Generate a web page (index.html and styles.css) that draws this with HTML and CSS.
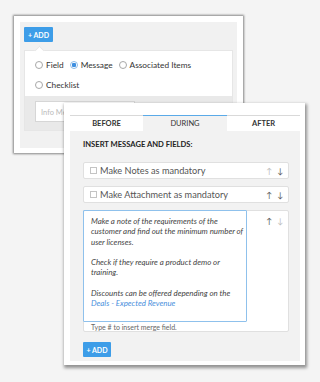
FILE: index.html
```html
<!DOCTYPE html>
<html lang="en">
<head>
  <meta charset="UTF-8">
  <title>Message Fields</title>
  <link rel="stylesheet" href="styles.css">
</head>
<body>
  <div class="stage">

    <div class="window window-back">
      <div class="window-inner">
        <button class="add-btn">+ ADD</button>
        <div class="popup">
          <div class="popup-options">
            <label class="radio"><span class="dot"></span>Field</label>
            <label class="radio"><span class="dot on"></span>Message</label>
            <label class="radio"><span class="dot"></span>Associated Items</label>
            <label class="radio"><span class="dot"></span>Checklist</label>
          </div>
          <div class="popup-foot">
            <div class="text-input">Info Message</div>
          </div>
        </div>
      </div>
    </div>

    <div class="window window-front">
      <div class="tabs">
        <div class="tab">BEFORE</div>
        <div class="tab active">DURING</div>
        <div class="tab">AFTER</div>
      </div>
      <div class="panel">
        <div class="panel-title">INSERT MESSAGE AND FIELDS:</div>

        <div class="row">
          <span class="check"></span>
          <span class="row-label">Make Notes as mandatory</span>
          <span class="arrows"><span class="muted">&#8593;</span><span>&#8595;</span></span>
        </div>

        <div class="row">
          <span class="check"></span>
          <span class="row-label">Make Attachment as mandatory</span>
          <span class="arrows"><span>&#8593;</span><span>&#8595;</span></span>
        </div>

        <div class="row row-message">
          <div class="message-col">
            <div class="message-box">
              <p>Make a note of the requirements of the<br>customer and find out the minimum number of<br>user licenses.</p>
              <p>Check if they require a product demo or<br>training.</p>
              <p>Discounts can be offered depending on the<br><span class="merge">Deals - Expected Revenue</span></p>
            </div>
            <div class="hint">Type # to insert merge field.</div>
          </div>
          <span class="arrows"><span>&#8593;</span><span class="muted">&#8595;</span></span>
        </div>

        <button class="add-btn">+ ADD</button>
      </div>
    </div>

  </div>
</body>
</html>
```

FILE: styles.css
```css
* {
  box-sizing: border-box;
  margin: 0;
  padding: 0;
}
body {
  background: #f4f4f4;
  font-family: Lato, "Open Sans", sans-serif;
  color: #333;
  overflow: hidden;
}
.stage {
  position: relative;
  width: 320px;
  height: 382px;
}
.window {
  position: absolute;
  background: #fff;
}
.add-btn {
  display: block;
  background: #3d9de8;
  color: #fff;
  border: none;
  border-radius: 1px;
  font-family: inherit;
  font-size: 7px;
  font-weight: 700;
  height: 15px;
  padding: 0 3px;
}

/* back window */
.window-back {
  left: 14px;
  top: 16px;
  width: 229px;
  height: 137px;
  padding: 6px 6px 5px 6px;
  box-shadow: 0 0 2px 1px rgba(0, 0, 0, 0.45);
}
.window-inner {
  background: #f1f1f1;
  height: 100%;
  padding: 5px 4px;
}
.window-back .add-btn {
  width: 29px;
}
.popup {
  position: relative;
  margin-top: 8px;
  background: #fff;
  border: 1px solid #e6e6e6;
}
.popup::before {
  content: "";
  position: absolute;
  top: -4px;
  left: 11px;
  width: 6px;
  height: 6px;
  background: #fff;
  border-left: 1px solid #e6e6e6;
  border-top: 1px solid #e6e6e6;
  transform: rotate(45deg);
}
.popup-options {
  display: flex;
  flex-wrap: wrap;
  column-gap: 6px;
  row-gap: 10px;
  padding: 9px 10px 6px;
  width: 200px;
}
.radio {
  display: flex;
  align-items: center;
  font-size: 8.3px;
  height: 10px;
  color: #333;
}
.dot {
  width: 8px;
  height: 8px;
  border: 1px solid #a8a8a8;
  border-radius: 50%;
  margin-right: 3px;
  background: #fff;
}
.dot.on {
  border-color: #8cbbe8;
  background: radial-gradient(circle, #3d8fe0 0 2px, #fff 2.5px);
}
.popup-foot {
  background: #e9e9e9;
  padding: 5px 10px 8px;
}
.text-input {
  width: 100px;
  height: 21px;
  background: #fff;
  border: 1px solid #d6d6d6;
  font-size: 7.5px;
  color: #bbb;
  padding: 6px 5px;
}

/* front window */
.window-front {
  left: 64px;
  top: 103px;
  width: 241px;
  height: 262px;
  padding: 12px 5px 4px 6px;
  box-shadow: 1px 2px 3px 1px rgba(0, 0, 0, 0.4);
  display: flex;
  flex-direction: column;
}
.tabs {
  display: flex;
  border-top: 1px solid #d9d9d9;
  height: 16px;
}
.tab {
  flex: 73;
  font-size: 7.5px;
  font-weight: 700;
  color: #333;
  display: flex;
  align-items: center;
  justify-content: center;
}
.tab.active {
  flex: 84;
  background: #f2f2f2;
  border-top: 1px solid #5aaae8;
  margin-top: -1px;
  font-weight: 400;
}
.panel {
  flex: 1;
  background: #f2f2f2;
  padding: 8px 11px 4px 13px;
}
.panel-title {
  font-size: 7.6px;
  font-weight: 700;
  color: #222;
  line-height: 10px;
  margin-bottom: 13px;
}
.row {
  display: flex;
  align-items: center;
  background: #fff;
  border: 1px solid #e0e0e0;
  border-radius: 2px;
  height: 17px;
  padding: 0 6px;
  margin-bottom: 7px;
}
.check {
  width: 7px;
  height: 7px;
  border: 1px solid #c4c4c4;
  margin-right: 3px;
}
.row-label {
  flex: 1;
  font-size: 9.2px;
  color: #555;
}
.arrows {
  display: flex;
  gap: 5px;
  font-size: 8px;
  color: #555;
  margin-right: -1px;
}
.arrows .muted {
  color: #bbb;
}
.row-message {
  height: 122px;
  align-items: flex-start;
  padding: 0 6px 0 0;
  margin-bottom: 10px;
}
.row-message .arrows {
  margin-left: auto;
  margin-top: 5px;
}
.message-col {
  width: 164px;
  margin: -1px 0 0 -1px;
}
.message-box {
  height: 112px;
  border: 1px solid #8fc1ec;
  border-radius: 1px;
  padding: 5px 4px 5px 7px;
  font-size: 7.9px;
  font-style: italic;
  line-height: 10.3px;
  color: #444;
  white-space: nowrap;
  overflow: hidden;
}
.message-box p {
  margin-bottom: 10.3px;
}
.merge {
  color: #4a8fdc;
}
.hint {
  font-size: 7px;
  color: #666;
  padding: 1px 0 0 8px;
  line-height: 9px;
}
.window-front .add-btn {
  width: 28px;
}
```
